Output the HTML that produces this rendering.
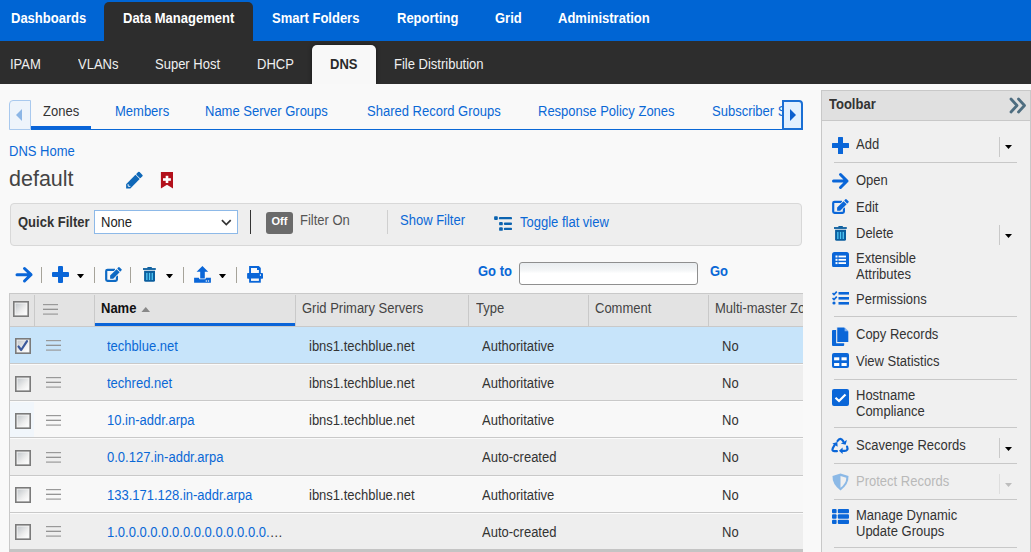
<!DOCTYPE html>
<html><head><meta charset="utf-8"><style>
html,body{margin:0;padding:0;width:1031px;height:552px;overflow:hidden;background:#f8f8f8;font-family:"Liberation Sans", sans-serif;}
body{position:relative}
</style></head><body>
<div style="position:absolute;left:0px;top:0px;width:1031px;height:41px;background:#0065d4"></div><div style="position:absolute;left:104px;top:2px;width:149px;height:39px;background:#2d2d2d;border-radius:5px 5px 0 0"></div><div style="position:absolute;left:10.7px;top:12.15px;font-size:14px;line-height:13px;color:#fff;font-weight:bold;white-space:nowrap;transform:scaleX(0.928571);transform-origin:0 0;">Dashboards</div><div style="position:absolute;left:122.6px;top:12.15px;font-size:14px;line-height:13px;color:#fff;font-weight:bold;white-space:nowrap;transform:scaleX(0.928571);transform-origin:0 0;">Data Management</div><div style="position:absolute;left:271.6px;top:12.15px;font-size:14px;line-height:13px;color:#fff;font-weight:bold;white-space:nowrap;transform:scaleX(0.928571);transform-origin:0 0;">Smart Folders</div><div style="position:absolute;left:396.6px;top:12.15px;font-size:14px;line-height:13px;color:#fff;font-weight:bold;white-space:nowrap;transform:scaleX(0.928571);transform-origin:0 0;">Reporting</div><div style="position:absolute;left:495.2px;top:12.15px;font-size:14px;line-height:13px;color:#fff;font-weight:bold;white-space:nowrap;transform:scaleX(0.928571);transform-origin:0 0;">Grid</div><div style="position:absolute;left:558.3px;top:12.15px;font-size:14px;line-height:13px;color:#fff;font-weight:bold;white-space:nowrap;transform:scaleX(0.928571);transform-origin:0 0;">Administration</div><div style="position:absolute;left:0px;top:41px;width:1031px;height:43px;background:#2d2d2d"></div><div style="position:absolute;left:312px;top:45px;width:64px;height:39px;background:#f8f8f8;border-radius:5px 5px 0 0;box-shadow:0 0 4px rgba(0,0,0,.5)"></div><div style="position:absolute;left:10.3px;top:58.15px;font-size:14px;line-height:13px;color:#f0f0f0;font-weight:normal;white-space:nowrap;transform:scaleX(0.928571);transform-origin:0 0;">IPAM</div><div style="position:absolute;left:78.2px;top:58.15px;font-size:14px;line-height:13px;color:#f0f0f0;font-weight:normal;white-space:nowrap;transform:scaleX(0.928571);transform-origin:0 0;">VLANs</div><div style="position:absolute;left:154.7px;top:58.15px;font-size:14px;line-height:13px;color:#f0f0f0;font-weight:normal;white-space:nowrap;transform:scaleX(0.928571);transform-origin:0 0;">Super Host</div><div style="position:absolute;left:256.8px;top:58.15px;font-size:14px;line-height:13px;color:#f0f0f0;font-weight:normal;white-space:nowrap;transform:scaleX(0.928571);transform-origin:0 0;">DHCP</div><div style="position:absolute;left:394.2px;top:58.15px;font-size:14px;line-height:13px;color:#f0f0f0;font-weight:normal;white-space:nowrap;transform:scaleX(0.928571);transform-origin:0 0;">File Distribution</div><div style="position:absolute;left:330px;top:58.15px;font-size:14px;line-height:13px;color:#2a2a2a;font-weight:bold;white-space:nowrap;transform:scaleX(0.928571);transform-origin:0 0;">DNS</div><div style="position:absolute;left:0px;top:84px;width:1031px;height:468px;background:#f9f9f9"></div><div style="position:absolute;left:31px;top:128.5px;width:751px;height:1.5px;background:#0a68d6"></div><div style="position:absolute;left:31px;top:126px;width:60px;height:3.3px;background:#0a64d8"></div><div style="position:absolute;left:42.7px;top:105.15px;font-size:14px;line-height:13px;color:#333;font-weight:normal;white-space:nowrap;transform:scaleX(0.928571);transform-origin:0 0;">Zones</div><div style="position:absolute;left:0;top:90px;width:782px;height:40px;overflow:hidden"><div style="position:absolute;left:0;top:-90px;width:1031px;height:552px"><div style="position:absolute;left:114.6px;top:105.15px;font-size:14px;line-height:13px;color:#0a68d6;font-weight:normal;white-space:nowrap;transform:scaleX(0.928571);transform-origin:0 0;">Members</div><div style="position:absolute;left:205.3px;top:105.15px;font-size:14px;line-height:13px;color:#0a68d6;font-weight:normal;white-space:nowrap;transform:scaleX(0.928571);transform-origin:0 0;">Name Server Groups</div><div style="position:absolute;left:367px;top:105.15px;font-size:14px;line-height:13px;color:#0a68d6;font-weight:normal;white-space:nowrap;transform:scaleX(0.928571);transform-origin:0 0;">Shared Record Groups</div><div style="position:absolute;left:538.4px;top:105.15px;font-size:14px;line-height:13px;color:#0a68d6;font-weight:normal;white-space:nowrap;transform:scaleX(0.928571);transform-origin:0 0;">Response Policy Zones</div><div style="position:absolute;left:712px;top:105.15px;font-size:14px;line-height:13px;color:#0a68d6;font-weight:normal;white-space:nowrap;transform:scaleX(0.928571);transform-origin:0 0;">Subscriber Sites</div></div></div><div style="position:absolute;left:9px;top:100px;width:20px;height:28px;background:#eef4fb;border:1px solid #a9c9ee;border-radius:4px 0 0 0"></div><svg style="position:absolute;left:15px;top:108px" width="8" height="14" viewBox="0 0 8 14"><path d="M7 1 L1 7 L7 13 Z" fill="#8cb6e6"/></svg><div style="position:absolute;left:782px;top:100px;width:17px;height:26px;background:#e2f0fe;border:2px solid #1a6fd4;border-radius:0 4px 0 0"></div><svg style="position:absolute;left:789px;top:108px" width="8" height="14" viewBox="0 0 8 14"><path d="M1 1 L7 7 L1 13 Z" fill="#0a5fcf"/></svg><div style="position:absolute;left:8.5px;top:145.15px;font-size:14px;line-height:13px;color:#0a68d6;font-weight:normal;white-space:nowrap;transform:scaleX(0.928571);transform-origin:0 0;">DNS Home</div><div style="position:absolute;left:9px;top:168.8px;font-size:21.5px;line-height:21.5px;color:#444;font-weight:normal;white-space:nowrap;">default</div><svg style="position:absolute;left:122px;top:168px" width="24" height="24" viewBox="0 0 24 24"><g transform="translate(4.1 20.4) rotate(-45)"><path d="M0 0 L3 -3 H16.2 V3 H3 Z" fill="#0f68b8"/><rect x="16.9" y="-3" width="4.2" height="6" rx="1" fill="#0f68b8"/><path d="M4.4 -1.6 L3 0 L4.4 1.6" stroke="#f8f8f8" stroke-width="0.9" fill="none"/></g></svg><svg style="position:absolute;left:155px;top:168px" width="24" height="24" viewBox="0 0 24 24"><path d="M5.9 4.1 H18 V20.4 L12 16.7 L5.9 20.4 Z" fill="#b3111c"/><rect x="8" y="10.2" width="7.9" height="2.6" fill="#fff"/><rect x="10.7" y="7.8" width="2.6" height="7.2" fill="#fff"/></svg><div style="position:absolute;left:10px;top:203px;width:790px;height:41px;background:#eeeeee;border:1px solid #d8d8d8;border-radius:4px"></div><div style="position:absolute;left:17.5px;top:216.15px;font-size:14px;line-height:13px;color:#333;font-weight:bold;white-space:nowrap;transform:scaleX(0.928571);transform-origin:0 0;">Quick Filter</div><div style="position:absolute;left:94px;top:210px;width:142px;height:22px;background:#fff;border:1px solid #8db9e8"></div><div style="position:absolute;left:100.5px;top:216.15px;font-size:14px;line-height:13px;color:#222;font-weight:normal;white-space:nowrap;transform:scaleX(0.928571);transform-origin:0 0;">None</div><svg style="position:absolute;left:220.5px;top:218.5px" width="11" height="8" viewBox="0 0 11 8"><path d="M0.9 1.2 L5.3 5.6 L9.7 1.2" stroke="#333" stroke-width="1.7" fill="none"/></svg><div style="position:absolute;left:250px;top:210px;width:1.3px;height:24px;background:#333"></div><div style="position:absolute;left:266px;top:212px;width:27px;height:22px;background:#6b6b6b;border-radius:3px"></div><div style="position:absolute;left:271.5px;top:216.19px;font-size:11px;line-height:11px;color:#fff;font-weight:bold;white-space:nowrap;">Off</div><div style="position:absolute;left:300px;top:213.95px;font-size:14px;line-height:13px;color:#555;font-weight:normal;white-space:nowrap;transform:scaleX(0.928571);transform-origin:0 0;">Filter On</div><div style="position:absolute;left:387px;top:210px;width:1px;height:24px;background:#cfcfcf"></div><div style="position:absolute;left:400.3px;top:213.95px;font-size:14px;line-height:13px;color:#0a68d6;font-weight:normal;white-space:nowrap;transform:scaleX(0.928571);transform-origin:0 0;">Show Filter</div><svg style="position:absolute;left:490px;top:211px" width="24" height="24" viewBox="0 0 24 24"><rect x="4.1" y="5.2" width="3.7" height="3.7" rx="0.9" fill="#0b63b0"/><rect x="8.9" y="6.1" width="13.1" height="2.2" rx="0.9" fill="#0b63b0"/><rect x="9.1" y="11.1" width="3.7" height="3.2" rx="0.9" fill="#0b63b0"/><rect x="13.9" y="11.5" width="8.1" height="2.4" rx="0.9" fill="#0b63b0"/><rect x="9.1" y="16.3" width="3.7" height="3.5" rx="0.9" fill="#0b63b0"/><rect x="13.9" y="16.7" width="8.1" height="2.4" rx="0.9" fill="#0b63b0"/></svg><div style="position:absolute;left:520px;top:216.15px;font-size:14px;line-height:13px;color:#0a68d6;font-weight:normal;white-space:nowrap;transform:scaleX(0.928571);transform-origin:0 0;">Toggle flat view</div><svg style="position:absolute;left:15px;top:266px" width="19" height="18" viewBox="0 0 19 18"><path d="M2 8.7 H16 M9.5 2.5 L16 8.7 L9.5 15" stroke="#0a66d8" stroke-width="3" fill="none" stroke-linecap="round" stroke-linejoin="round"/></svg><div style="position:absolute;left:41.2px;top:267px;width:1.1px;height:16px;background:#a6a39a"></div><div style="position:absolute;left:94.2px;top:267px;width:1.1px;height:16px;background:#a6a39a"></div><div style="position:absolute;left:130.2px;top:267px;width:1.1px;height:16px;background:#a6a39a"></div><div style="position:absolute;left:183px;top:267px;width:1.1px;height:16px;background:#a6a39a"></div><div style="position:absolute;left:236px;top:267px;width:1.1px;height:16px;background:#a6a39a"></div><svg style="position:absolute;left:52px;top:266px" width="17" height="17" viewBox="0 0 17 17"><rect x="6" y="0" width="5" height="17" rx="1" fill="#0a66d8"/><rect x="0" y="6" width="17" height="5" rx="1" fill="#0a66d8"/></svg><svg style="position:absolute;left:77px;top:273.5px" width="7" height="4.5" viewBox="0 0 7 4.5"><path d="M0 0 H7 L3.5 4.5 Z" fill="#000"/></svg><svg style="position:absolute;left:166px;top:273.5px" width="7" height="4.5" viewBox="0 0 7 4.5"><path d="M0 0 H7 L3.5 4.5 Z" fill="#000"/></svg><svg style="position:absolute;left:219px;top:273.5px" width="7" height="4.5" viewBox="0 0 7 4.5"><path d="M0 0 H7 L3.5 4.5 Z" fill="#000"/></svg><svg style="position:absolute;left:101px;top:262px" width="24" height="24" viewBox="0 0 24 24"><path d="M14 7.8 H6.5 Q5.2 7.8 5.2 9.1 V17.6 Q5.2 18.9 6.5 18.9 H14.6 Q15.9 18.9 15.9 17.6 V13.5" stroke="#0e6ac4" stroke-width="2.2" fill="none"/><g transform="translate(9.1 16.7) rotate(-45)"><g fill="#f8f8f8" stroke="#f8f8f8" stroke-width="1.4"><path d="M0 0 L2.2 -2.2 H11.3 V2.2 H2.2 Z"/><rect x="12.1" y="-2.2" width="2.6" height="4.4" rx="0.7"/></g><g fill="#0e6ac4"><path d="M0 0 L2.2 -2.2 H11.3 V2.2 H2.2 Z"/><rect x="12.1" y="-2.2" width="2.6" height="4.4" rx="0.7"/></g></g></svg><svg style="position:absolute;left:138px;top:262px" width="24" height="24" viewBox="0 0 24 24"><rect x="9.3" y="5" width="4.6" height="1.6" rx="0.6" fill="#0b5e9e"/><rect x="5" y="6.1" width="12.8" height="1.8" fill="#0b5e9e"/><path d="M6.1 8.7 H17 V18.3 Q17 19.8 15.5 19.8 H7.6 Q6.1 19.8 6.1 18.3 Z" fill="#0b5e9e"/><rect x="8.2" y="10.9" width="1.3" height="7.1" fill="#4fc8f5"/><rect x="10.9" y="10.9" width="1.3" height="7.1" fill="#4fc8f5"/><rect x="13.6" y="10.9" width="1.3" height="7.1" fill="#4fc8f5"/></svg><svg style="position:absolute;left:190px;top:262px" width="24" height="24" viewBox="0 0 24 24"><path d="M12.4 3.9 L18.2 9.8 H14.8 V16.5 H10.2 V9.8 H6.6 Z" fill="#0a66d8"/><path d="M4.1 15.7 H8.8 L9.6 17.3 H15.2 L16.1 15.7 H20.9 V20.7 H4.1 Z" fill="#0a66d8"/><circle cx="16.3" cy="19.1" r="0.75" fill="#f8f8f8"/><circle cx="18.5" cy="19.1" r="0.75" fill="#f8f8f8"/></svg><svg style="position:absolute;left:243px;top:262px" width="24" height="24" viewBox="0 0 24 24"><path d="M6.1 4.1 H15.8 L17.8 6.1 V11.5 H6.1 Z" fill="#0a66d8"/><path d="M8 6.1 H14 V8.1 H15.9 V11.5 H8 Z" fill="#f8f8f8"/><rect x="4.1" y="10.9" width="15.9" height="5.8" rx="0.8" fill="#0a66d8"/><rect x="16.9" y="12.2" width="1" height="1.7" fill="#f8f8f8"/><rect x="6.1" y="15.5" width="11.7" height="5.2" fill="#0a66d8"/><rect x="8" y="16.5" width="7.9" height="2.4" fill="#f8f8f8"/></svg><div style="position:absolute;left:478px;top:265.15px;font-size:14px;line-height:13px;color:#0a68d6;font-weight:bold;white-space:nowrap;transform:scaleX(0.928571);transform-origin:0 0;">Go to</div><div style="position:absolute;left:519px;top:262px;width:177px;height:21px;background:linear-gradient(#e9edf0,#f4f6f7 35%,#fff 50%);border:1px solid #8f8f8f;border-radius:3px"></div><div style="position:absolute;left:710.2px;top:265.15px;font-size:14px;line-height:13px;color:#0a68d6;font-weight:bold;white-space:nowrap;transform:scaleX(0.928571);transform-origin:0 0;">Go</div><div style="position:absolute;left:0;top:0;width:802.6px;height:552px;overflow:hidden"><div style="position:absolute;left:9px;top:293px;width:900px;height:33px;background:#e3e3e3;border-top:1px solid #c9c9c9;box-sizing:border-box"></div><div style="position:absolute;left:9px;top:293px;width:1px;height:260px;background:#c9c9c9"></div><div style="position:absolute;left:34px;top:295px;width:1px;height:31px;background:#c9c9c9"></div><div style="position:absolute;left:94.2px;top:295px;width:1px;height:31px;background:#c9c9c9"></div><div style="position:absolute;left:295px;top:295px;width:1px;height:31px;background:#c9c9c9"></div><div style="position:absolute;left:468px;top:295px;width:1px;height:31px;background:#c9c9c9"></div><div style="position:absolute;left:588px;top:295px;width:1px;height:31px;background:#c9c9c9"></div><div style="position:absolute;left:708px;top:295px;width:1px;height:31px;background:#c9c9c9"></div><div style="position:absolute;left:94.7px;top:323px;width:200px;height:3px;background:#0a64d8"></div><svg style="position:absolute;left:13px;top:301px" width="16" height="16" viewBox="0 0 16 16"><defs><linearGradient id="g" x1="0" y1="0" x2="1" y2="1"><stop offset="0" stop-color="#c3c8cc"/><stop offset="0.6" stop-color="#eeeeee"/><stop offset="1" stop-color="#fff"/></linearGradient></defs><rect x="0.8" y="0.8" width="14.4" height="14.4" fill="#f6f6f6" stroke="#7b7b7b" stroke-width="1.6"/><rect x="2.5" y="2.5" width="11" height="11" fill="url(#g)"/></svg><svg style="position:absolute;left:43px;top:304px" width="15" height="11" viewBox="0 0 15 11"><rect x="0" y="0" width="15" height="1.2" fill="#999"/><rect x="0" y="4.7" width="15" height="1.2" fill="#8a8a8a"/><rect x="0" y="9.5" width="15" height="1.2" fill="#9a9a9a"/></svg><div style="position:absolute;left:101px;top:302.15px;font-size:14px;line-height:13px;color:#111;font-weight:bold;white-space:nowrap;transform:scaleX(0.928571);transform-origin:0 0;">Name</div><svg style="position:absolute;left:140.7px;top:306.5px" width="10" height="5.5" viewBox="0 0 10 5.5"><path d="M0 5.5 L4.75 0 L9.5 5.5 Z" fill="#888"/></svg><div style="position:absolute;left:302px;top:302.15px;font-size:14px;line-height:13px;color:#444;font-weight:normal;white-space:nowrap;transform:scaleX(0.928571);transform-origin:0 0;">Grid Primary Servers</div><div style="position:absolute;left:475.5px;top:302.15px;font-size:14px;line-height:13px;color:#444;font-weight:normal;white-space:nowrap;transform:scaleX(0.928571);transform-origin:0 0;">Type</div><div style="position:absolute;left:594.5px;top:302.15px;font-size:14px;line-height:13px;color:#444;font-weight:normal;white-space:nowrap;transform:scaleX(0.928571);transform-origin:0 0;">Comment</div><div style="position:absolute;left:715px;top:302.15px;font-size:14px;line-height:13px;color:#444;font-weight:normal;white-space:nowrap;transform:scaleX(0.928571);transform-origin:0 0;">Multi-master Zone</div><div style="position:absolute;left:10px;top:326px;width:900px;height:37.30000000000001px;background:#c7e4fa"></div><div style="position:absolute;left:10px;top:363.3px;width:900px;height:37.0px;background:#eeeeee"></div><div style="position:absolute;left:10px;top:400.3px;width:900px;height:37.19999999999999px;background:#f8f8f8"></div><div style="position:absolute;left:10px;top:437.5px;width:900px;height:38.30000000000001px;background:#eeeeee"></div><div style="position:absolute;left:10px;top:475.8px;width:900px;height:36.99999999999994px;background:#f8f8f8"></div><div style="position:absolute;left:10px;top:512.8px;width:900px;height:37.200000000000045px;background:#eeeeee"></div><div style="position:absolute;left:9px;top:325.7px;width:900px;height:1.3px;background:#c9c9c9"></div><div style="position:absolute;left:10px;top:401px;width:24px;height:36px;background:#f1f6fb"></div><div style="position:absolute;left:10px;top:362.7px;width:900px;height:1.2px;background:#c9c9c9"></div><div style="position:absolute;left:10px;top:363.90000000000003px;width:900px;height:1px;background:#fbfbfb"></div><div style="position:absolute;left:10px;top:399.7px;width:900px;height:1.2px;background:#c9c9c9"></div><div style="position:absolute;left:10px;top:400.90000000000003px;width:900px;height:1px;background:#fbfbfb"></div><div style="position:absolute;left:10px;top:436.9px;width:900px;height:1.2px;background:#c9c9c9"></div><div style="position:absolute;left:10px;top:438.1px;width:900px;height:1px;background:#fbfbfb"></div><div style="position:absolute;left:10px;top:475.2px;width:900px;height:1.2px;background:#c9c9c9"></div><div style="position:absolute;left:10px;top:476.40000000000003px;width:900px;height:1px;background:#fbfbfb"></div><div style="position:absolute;left:10px;top:512.1999999999999px;width:900px;height:1.2px;background:#c9c9c9"></div><div style="position:absolute;left:10px;top:513.4px;width:900px;height:1px;background:#fbfbfb"></div><svg style="position:absolute;left:15px;top:338.3px" width="16" height="16" viewBox="0 0 16 16"><defs><linearGradient id="g" x1="0" y1="0" x2="1" y2="1"><stop offset="0" stop-color="#c3c8cc"/><stop offset="0.6" stop-color="#eeeeee"/><stop offset="1" stop-color="#fff"/></linearGradient></defs><rect x="0.8" y="0.8" width="14.4" height="14.4" fill="#f6f6f6" stroke="#7b7b7b" stroke-width="1.6"/><rect x="2.5" y="2.5" width="11" height="11" fill="url(#g)"/><path d="M3.5 8.5 L6.2 12 L12 3.2" stroke="#3b5a9c" stroke-width="2.2" fill="none" stroke-linecap="round" stroke-linejoin="round"/></svg><svg style="position:absolute;left:46px;top:340.2px" width="15" height="11" viewBox="0 0 15 11"><rect x="0" y="0" width="15" height="1.2" fill="#999"/><rect x="0" y="4.7" width="15" height="1.2" fill="#8a8a8a"/><rect x="0" y="9.5" width="15" height="1.2" fill="#9a9a9a"/></svg><div style="position:absolute;left:107px;top:339.65px;font-size:14px;line-height:13px;color:#0a68d6;font-weight:normal;white-space:nowrap;transform:scaleX(0.928571);transform-origin:0 0;">techblue.net</div><div style="position:absolute;left:308.5px;top:339.65px;font-size:14px;line-height:13px;color:#333;font-weight:normal;white-space:nowrap;transform:scaleX(0.928571);transform-origin:0 0;">ibns1.techblue.net</div><div style="position:absolute;left:482px;top:339.65px;font-size:14px;line-height:13px;color:#333;font-weight:normal;white-space:nowrap;transform:scaleX(0.928571);transform-origin:0 0;">Authoritative</div><div style="position:absolute;left:721.5px;top:339.65px;font-size:14px;line-height:13px;color:#333;font-weight:normal;white-space:nowrap;transform:scaleX(0.928571);transform-origin:0 0;">No</div><svg style="position:absolute;left:15px;top:375.8px" width="16" height="16" viewBox="0 0 16 16"><defs><linearGradient id="g" x1="0" y1="0" x2="1" y2="1"><stop offset="0" stop-color="#c3c8cc"/><stop offset="0.6" stop-color="#eeeeee"/><stop offset="1" stop-color="#fff"/></linearGradient></defs><rect x="0.8" y="0.8" width="14.4" height="14.4" fill="#f6f6f6" stroke="#7b7b7b" stroke-width="1.6"/><rect x="2.5" y="2.5" width="11" height="11" fill="url(#g)"/></svg><svg style="position:absolute;left:46px;top:377.4px" width="15" height="11" viewBox="0 0 15 11"><rect x="0" y="0" width="15" height="1.2" fill="#999"/><rect x="0" y="4.7" width="15" height="1.2" fill="#8a8a8a"/><rect x="0" y="9.5" width="15" height="1.2" fill="#9a9a9a"/></svg><div style="position:absolute;left:107px;top:376.95px;font-size:14px;line-height:13px;color:#0a68d6;font-weight:normal;white-space:nowrap;transform:scaleX(0.928571);transform-origin:0 0;">techred.net</div><div style="position:absolute;left:308.5px;top:376.95px;font-size:14px;line-height:13px;color:#333;font-weight:normal;white-space:nowrap;transform:scaleX(0.928571);transform-origin:0 0;">ibns1.techblue.net</div><div style="position:absolute;left:482px;top:376.95px;font-size:14px;line-height:13px;color:#333;font-weight:normal;white-space:nowrap;transform:scaleX(0.928571);transform-origin:0 0;">Authoritative</div><div style="position:absolute;left:721.5px;top:376.95px;font-size:14px;line-height:13px;color:#333;font-weight:normal;white-space:nowrap;transform:scaleX(0.928571);transform-origin:0 0;">No</div><svg style="position:absolute;left:15px;top:413.2px" width="16" height="16" viewBox="0 0 16 16"><defs><linearGradient id="g" x1="0" y1="0" x2="1" y2="1"><stop offset="0" stop-color="#c3c8cc"/><stop offset="0.6" stop-color="#eeeeee"/><stop offset="1" stop-color="#fff"/></linearGradient></defs><rect x="0.8" y="0.8" width="14.4" height="14.4" fill="#f6f6f6" stroke="#7b7b7b" stroke-width="1.6"/><rect x="2.5" y="2.5" width="11" height="11" fill="url(#g)"/></svg><svg style="position:absolute;left:46px;top:414.7px" width="15" height="11" viewBox="0 0 15 11"><rect x="0" y="0" width="15" height="1.2" fill="#999"/><rect x="0" y="4.7" width="15" height="1.2" fill="#8a8a8a"/><rect x="0" y="9.5" width="15" height="1.2" fill="#9a9a9a"/></svg><div style="position:absolute;left:107px;top:413.95px;font-size:14px;line-height:13px;color:#0a68d6;font-weight:normal;white-space:nowrap;transform:scaleX(0.928571);transform-origin:0 0;">10.in-addr.arpa</div><div style="position:absolute;left:308.5px;top:413.95px;font-size:14px;line-height:13px;color:#333;font-weight:normal;white-space:nowrap;transform:scaleX(0.928571);transform-origin:0 0;">ibns1.techblue.net</div><div style="position:absolute;left:482px;top:413.95px;font-size:14px;line-height:13px;color:#333;font-weight:normal;white-space:nowrap;transform:scaleX(0.928571);transform-origin:0 0;">Authoritative</div><div style="position:absolute;left:721.5px;top:413.95px;font-size:14px;line-height:13px;color:#333;font-weight:normal;white-space:nowrap;transform:scaleX(0.928571);transform-origin:0 0;">No</div><svg style="position:absolute;left:15px;top:450.1px" width="16" height="16" viewBox="0 0 16 16"><defs><linearGradient id="g" x1="0" y1="0" x2="1" y2="1"><stop offset="0" stop-color="#c3c8cc"/><stop offset="0.6" stop-color="#eeeeee"/><stop offset="1" stop-color="#fff"/></linearGradient></defs><rect x="0.8" y="0.8" width="14.4" height="14.4" fill="#f6f6f6" stroke="#7b7b7b" stroke-width="1.6"/><rect x="2.5" y="2.5" width="11" height="11" fill="url(#g)"/></svg><svg style="position:absolute;left:46px;top:451.9px" width="15" height="11" viewBox="0 0 15 11"><rect x="0" y="0" width="15" height="1.2" fill="#999"/><rect x="0" y="4.7" width="15" height="1.2" fill="#8a8a8a"/><rect x="0" y="9.5" width="15" height="1.2" fill="#9a9a9a"/></svg><div style="position:absolute;left:107px;top:451.15px;font-size:14px;line-height:13px;color:#0a68d6;font-weight:normal;white-space:nowrap;transform:scaleX(0.928571);transform-origin:0 0;">0.0.127.in-addr.arpa</div><div style="position:absolute;left:482px;top:451.15px;font-size:14px;line-height:13px;color:#333;font-weight:normal;white-space:nowrap;transform:scaleX(0.928571);transform-origin:0 0;">Auto-created</div><div style="position:absolute;left:721.5px;top:451.15px;font-size:14px;line-height:13px;color:#333;font-weight:normal;white-space:nowrap;transform:scaleX(0.928571);transform-origin:0 0;">No</div><svg style="position:absolute;left:15px;top:486.7px" width="16" height="16" viewBox="0 0 16 16"><defs><linearGradient id="g" x1="0" y1="0" x2="1" y2="1"><stop offset="0" stop-color="#c3c8cc"/><stop offset="0.6" stop-color="#eeeeee"/><stop offset="1" stop-color="#fff"/></linearGradient></defs><rect x="0.8" y="0.8" width="14.4" height="14.4" fill="#f6f6f6" stroke="#7b7b7b" stroke-width="1.6"/><rect x="2.5" y="2.5" width="11" height="11" fill="url(#g)"/></svg><svg style="position:absolute;left:46px;top:488.9px" width="15" height="11" viewBox="0 0 15 11"><rect x="0" y="0" width="15" height="1.2" fill="#999"/><rect x="0" y="4.7" width="15" height="1.2" fill="#8a8a8a"/><rect x="0" y="9.5" width="15" height="1.2" fill="#9a9a9a"/></svg><div style="position:absolute;left:107px;top:489.45px;font-size:14px;line-height:13px;color:#0a68d6;font-weight:normal;white-space:nowrap;transform:scaleX(0.928571);transform-origin:0 0;">133.171.128.in-addr.arpa</div><div style="position:absolute;left:308.5px;top:489.45px;font-size:14px;line-height:13px;color:#333;font-weight:normal;white-space:nowrap;transform:scaleX(0.928571);transform-origin:0 0;">ibns1.techblue.net</div><div style="position:absolute;left:482px;top:489.45px;font-size:14px;line-height:13px;color:#333;font-weight:normal;white-space:nowrap;transform:scaleX(0.928571);transform-origin:0 0;">Authoritative</div><div style="position:absolute;left:721.5px;top:489.45px;font-size:14px;line-height:13px;color:#333;font-weight:normal;white-space:nowrap;transform:scaleX(0.928571);transform-origin:0 0;">No</div><svg style="position:absolute;left:15px;top:523.8px" width="16" height="16" viewBox="0 0 16 16"><defs><linearGradient id="g" x1="0" y1="0" x2="1" y2="1"><stop offset="0" stop-color="#c3c8cc"/><stop offset="0.6" stop-color="#eeeeee"/><stop offset="1" stop-color="#fff"/></linearGradient></defs><rect x="0.8" y="0.8" width="14.4" height="14.4" fill="#f6f6f6" stroke="#7b7b7b" stroke-width="1.6"/><rect x="2.5" y="2.5" width="11" height="11" fill="url(#g)"/></svg><svg style="position:absolute;left:46px;top:526.2px" width="15" height="11" viewBox="0 0 15 11"><rect x="0" y="0" width="15" height="1.2" fill="#999"/><rect x="0" y="4.7" width="15" height="1.2" fill="#8a8a8a"/><rect x="0" y="9.5" width="15" height="1.2" fill="#9a9a9a"/></svg><div style="position:absolute;left:107px;top:526.45px;font-size:14px;line-height:13px;color:#0a68d6;font-weight:normal;white-space:nowrap;transform:scaleX(0.928571);transform-origin:0 0;">1.0.0.0.0.0.0.0.0.0.0.0.0.0.0.<span style="color:#333">&#8230;</span></div><div style="position:absolute;left:482px;top:526.45px;font-size:14px;line-height:13px;color:#333;font-weight:normal;white-space:nowrap;transform:scaleX(0.928571);transform-origin:0 0;">Auto-created</div><div style="position:absolute;left:721.5px;top:526.45px;font-size:14px;line-height:13px;color:#333;font-weight:normal;white-space:nowrap;transform:scaleX(0.928571);transform-origin:0 0;">No</div><div style="position:absolute;left:9px;top:549.4px;width:900px;height:2.6px;background:#c4c4c4"></div></div><div style="position:absolute;left:821px;top:90px;width:210px;height:470px;background:#f0f0f0;border:1px solid #c8c8c8;box-sizing:border-box"></div><div style="position:absolute;left:822px;top:91px;width:208px;height:29px;background:#e0e0e0;border-bottom:1px solid #c8c8c8"></div><div style="position:absolute;left:829px;top:98.15px;font-size:14px;line-height:13px;color:#333;font-weight:bold;white-space:nowrap;transform:scaleX(0.928571);transform-origin:0 0;">Toolbar</div><svg style="position:absolute;left:1009px;top:97px" width="18" height="18" viewBox="0 0 18 18"><path d="M2 2 L8 8.5 L2 15 M9.5 2 L15.5 8.5 L9.5 15" stroke="#4e6d80" stroke-width="2.8" fill="none" stroke-linecap="round" stroke-linejoin="round"/></svg><svg style="position:absolute;left:832px;top:137px" width="17" height="17" viewBox="0 0 17 17"><rect x="6" y="0" width="5" height="17" rx="0.5" fill="#0a66d8"/><rect x="0" y="6" width="17" height="5" rx="0.5" fill="#0a66d8"/></svg><div style="position:absolute;left:856px;top:138.15px;font-size:14px;line-height:13px;color:#333;font-weight:normal;white-space:nowrap;transform:scaleX(0.928571);transform-origin:0 0;">Add</div><div style="position:absolute;left:999.3px;top:136.5px;width:1.2px;height:20px;background:#c9c9c9"></div><svg style="position:absolute;left:1005px;top:145.0px" width="7" height="4" viewBox="0 0 7 4"><path d="M0 0 H7 L3.5 4 Z" fill="#000"/></svg><div style="position:absolute;left:834px;top:162px;width:183px;height:1.2px;background:#c8c8c8"></div><svg style="position:absolute;left:831px;top:172px" width="19" height="18" viewBox="0 0 19 18"><path d="M2.5 9 H16 M9.5 2.5 L16 9 L9.5 15.5" stroke="#0a66d8" stroke-width="3" fill="none" stroke-linecap="round" stroke-linejoin="round"/></svg><div style="position:absolute;left:856px;top:174.15px;font-size:14px;line-height:13px;color:#333;font-weight:normal;white-space:nowrap;transform:scaleX(0.928571);transform-origin:0 0;">Open</div><svg style="position:absolute;left:828px;top:194px" width="24" height="24" viewBox="0 0 24 24"><path d="M14 7.8 H6.5 Q5.2 7.8 5.2 9.1 V17.6 Q5.2 18.9 6.5 18.9 H14.6 Q15.9 18.9 15.9 17.6 V13.5" stroke="#0a66d8" stroke-width="2.2" fill="none"/><g transform="translate(9.1 16.7) rotate(-45)"><g fill="#f0f0f0" stroke="#f0f0f0" stroke-width="1.4"><path d="M0 0 L2.2 -2.2 H11.3 V2.2 H2.2 Z"/><rect x="12.1" y="-2.2" width="2.6" height="4.4" rx="0.7"/></g><g fill="#0a66d8"><path d="M0 0 L2.2 -2.2 H11.3 V2.2 H2.2 Z"/><rect x="12.1" y="-2.2" width="2.6" height="4.4" rx="0.7"/></g></g></svg><div style="position:absolute;left:856px;top:200.65px;font-size:14px;line-height:13px;color:#333;font-weight:normal;white-space:nowrap;transform:scaleX(0.928571);transform-origin:0 0;">Edit</div><svg style="position:absolute;left:829px;top:221px" width="24" height="24" viewBox="0 0 24 24"><rect x="9.3" y="5" width="4.6" height="1.6" rx="0.6" fill="#0b5e9e"/><rect x="5" y="6.1" width="12.8" height="1.8" fill="#0b5e9e"/><path d="M6.1 8.7 H17 V18.3 Q17 19.8 15.5 19.8 H7.6 Q6.1 19.8 6.1 18.3 Z" fill="#0b5e9e"/><rect x="8.2" y="10.9" width="1.3" height="7.1" fill="#4fc8f5"/><rect x="10.9" y="10.9" width="1.3" height="7.1" fill="#4fc8f5"/><rect x="13.6" y="10.9" width="1.3" height="7.1" fill="#4fc8f5"/></svg><div style="position:absolute;left:856px;top:227.15px;font-size:14px;line-height:13px;color:#333;font-weight:normal;white-space:nowrap;transform:scaleX(0.928571);transform-origin:0 0;">Delete</div><div style="position:absolute;left:999.3px;top:225px;width:1.2px;height:20px;background:#c9c9c9"></div><svg style="position:absolute;left:1005px;top:233.5px" width="7" height="4" viewBox="0 0 7 4"><path d="M0 0 H7 L3.5 4 Z" fill="#000"/></svg><svg style="position:absolute;left:832px;top:251.5px" width="17" height="15.5" viewBox="0 0 17 15.5"><rect x="0" y="0" width="17" height="15.5" rx="2.5" fill="#0a66d8"/><rect x="3.5" y="3.5" width="2" height="2" fill="#fff"/><rect x="6.5" y="3.6" width="7.5" height="1.8" fill="#fff"/><rect x="3.5" y="6.8" width="2" height="2" fill="#fff"/><rect x="6.5" y="6.9" width="7.5" height="1.8" fill="#fff"/><rect x="3.5" y="10.1" width="2" height="2" fill="#fff"/><rect x="6.5" y="10.2" width="7.5" height="1.8" fill="#fff"/></svg><div style="position:absolute;left:856px;top:252.15px;font-size:14px;line-height:13px;color:#333;font-weight:normal;white-space:nowrap;transform:scaleX(0.928571);transform-origin:0 0;">Extensible</div><div style="position:absolute;left:856px;top:268.15px;font-size:14px;line-height:13px;color:#333;font-weight:normal;white-space:nowrap;transform:scaleX(0.928571);transform-origin:0 0;">Attributes</div><svg style="position:absolute;left:832px;top:291px" width="17" height="14" viewBox="0 0 17 14"><path d="M0.5 2.2 L2 3.6 L4.8 0.6 M0.5 7.2 L2 8.6 L4.8 5.6" stroke="#0a66d8" stroke-width="1.6" fill="none"/><circle cx="2" cy="12" r="1.6" fill="#0a66d8"/><rect x="6.5" y="1" width="10.5" height="2.6" fill="#0a66d8"/><rect x="6.5" y="6" width="10.5" height="2.6" fill="#0a66d8"/><rect x="6.5" y="11" width="10.5" height="2.6" fill="#0a66d8"/></svg><div style="position:absolute;left:856px;top:293.15px;font-size:14px;line-height:13px;color:#333;font-weight:normal;white-space:nowrap;transform:scaleX(0.928571);transform-origin:0 0;">Permissions</div><div style="position:absolute;left:834px;top:315.8px;width:183px;height:1.2px;background:#c8c8c8"></div><svg style="position:absolute;left:831px;top:326px" width="20" height="21" viewBox="0 0 20 21"><rect x="1" y="4" width="12.2" height="16" rx="1" fill="#0a66d8"/><path d="M5.7 1 H13.6 L17.9 5.3 V16.6 H5.7 Z" fill="#0a66d8" stroke="#f0f0f0" stroke-width="1.1"/><path d="M13.6 1.6 V5.3 H17.3 Z" fill="#7fb0ee"/></svg><div style="position:absolute;left:856px;top:328.15px;font-size:14px;line-height:13px;color:#333;font-weight:normal;white-space:nowrap;transform:scaleX(0.928571);transform-origin:0 0;">Copy Records</div><svg style="position:absolute;left:832px;top:353px" width="17" height="15" viewBox="0 0 17 15"><rect x="0" y="0" width="17" height="15" rx="2" fill="#0a66d8"/><rect x="2.1" y="4.3" width="5.2" height="3" fill="#fff"/><rect x="9.5" y="4.3" width="5.2" height="3" fill="#fff"/><rect x="2.1" y="10" width="5.2" height="3" fill="#fff"/><rect x="9.5" y="10" width="5.2" height="3" fill="#fff"/></svg><div style="position:absolute;left:856px;top:355.15px;font-size:14px;line-height:13px;color:#333;font-weight:normal;white-space:nowrap;transform:scaleX(0.928571);transform-origin:0 0;">View Statistics</div><div style="position:absolute;left:834px;top:378.7px;width:183px;height:1.2px;background:#c8c8c8"></div><svg style="position:absolute;left:832px;top:389px" width="17" height="17" viewBox="0 0 17 17"><rect x="0" y="0" width="17" height="17" rx="2" fill="#0a66d8"/><path d="M3.5 8.8 L7 12 L13.5 5.5" stroke="#fff" stroke-width="2.2" fill="none"/></svg><div style="position:absolute;left:856px;top:389.15px;font-size:14px;line-height:13px;color:#333;font-weight:normal;white-space:nowrap;transform:scaleX(0.928571);transform-origin:0 0;">Hostname</div><div style="position:absolute;left:856px;top:404.65px;font-size:14px;line-height:13px;color:#333;font-weight:normal;white-space:nowrap;transform:scaleX(0.928571);transform-origin:0 0;">Compliance</div><div style="position:absolute;left:834px;top:427.2px;width:183px;height:1.2px;background:#c8c8c8"></div><svg style="position:absolute;left:828px;top:434px" width="26" height="24" viewBox="0 0 26 24"><g stroke="#0a66d8" stroke-width="2.2" fill="none" stroke-linecap="round"><path d="M9.5 7 Q12.3 2.6 15.2 7.2"/><path d="M8.9 17.2 H6.2 Q3.6 17 4.9 14 L6.6 11"/><path d="M19.1 12.6 Q20.6 16.8 16.6 16.8 H13.6"/></g><path d="M18.9 6.1 L17.6 10.7 L12.8 9.4 Z" fill="#0a66d8"/><path d="M4.3 9.4 L9.3 8 L9.6 12.7 Z" fill="#0a66d8"/><path d="M11 16.8 L14.6 13.5 L14.6 20 Z" fill="#0a66d8"/></svg><div style="position:absolute;left:856px;top:439.15px;font-size:14px;line-height:13px;color:#333;font-weight:normal;white-space:nowrap;transform:scaleX(0.928571);transform-origin:0 0;">Scavenge Records</div><div style="position:absolute;left:999.3px;top:438px;width:1.2px;height:20px;background:#c9c9c9"></div><svg style="position:absolute;left:1005px;top:446.5px" width="7" height="4" viewBox="0 0 7 4"><path d="M0 0 H7 L3.5 4 Z" fill="#000"/></svg><div style="position:absolute;left:834px;top:463px;width:183px;height:1.2px;background:#c8c8c8"></div><svg style="position:absolute;left:832px;top:473px" width="17" height="18" viewBox="0 0 17 18"><path d="M8.5 0.5 L16.5 3 Q17 11 8.5 17.5 Q0 11 0.5 3 Z" fill="#8cb9e6"/><path d="M8.5 3 L14.3 4.8 Q14.3 10.5 8.5 14.8 Z" fill="#f0f0f0"/></svg><div style="position:absolute;left:856px;top:475.15px;font-size:14px;line-height:13px;color:#b9b9b9;font-weight:normal;white-space:nowrap;transform:scaleX(0.928571);transform-origin:0 0;">Protect Records</div><div style="position:absolute;left:999.3px;top:474px;width:1.2px;height:20px;background:#dedede"></div><svg style="position:absolute;left:1005px;top:482.5px" width="7" height="4" viewBox="0 0 7 4"><path d="M0 0 H7 L3.5 4 Z" fill="#bdbdbd"/></svg><div style="position:absolute;left:834px;top:499px;width:183px;height:1.2px;background:#c8c8c8"></div><svg style="position:absolute;left:832px;top:509px" width="17" height="15" viewBox="0 0 17 15"><rect x="0" y="0" width="4.6" height="4.3" rx="1" fill="#0a66d8"/><rect x="5.8" y="0" width="11.2" height="4.3" rx="1" fill="#0a66d8"/><rect x="0" y="5.35" width="4.6" height="4.3" rx="1" fill="#0a66d8"/><rect x="5.8" y="5.35" width="11.2" height="4.3" rx="1" fill="#0a66d8"/><rect x="0" y="10.7" width="4.6" height="4.3" rx="1" fill="#0a66d8"/><rect x="5.8" y="10.7" width="11.2" height="4.3" rx="1" fill="#0a66d8"/></svg><div style="position:absolute;left:856px;top:509.15px;font-size:14px;line-height:13px;color:#333;font-weight:normal;white-space:nowrap;transform:scaleX(0.928571);transform-origin:0 0;">Manage Dynamic</div><div style="position:absolute;left:856px;top:525.15px;font-size:14px;line-height:13px;color:#333;font-weight:normal;white-space:nowrap;transform:scaleX(0.928571);transform-origin:0 0;">Update Groups</div><div style="position:absolute;left:834px;top:547px;width:183px;height:1.2px;background:#c8c8c8"></div>
</body></html>
